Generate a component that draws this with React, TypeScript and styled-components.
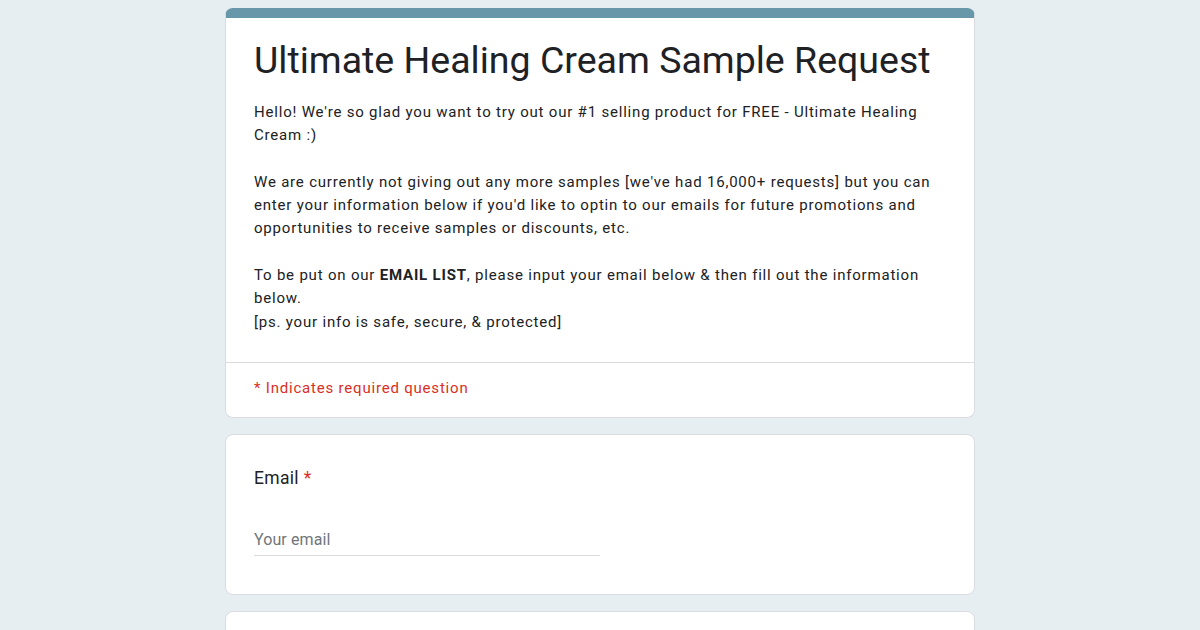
import React from 'react';
import styled, {createGlobalStyle} from "styled-components";

const GlobalStyle = createGlobalStyle`
  html, body {
    margin: 0;
    padding: 0;
    background: #e6eef1;
    overflow: hidden;
  }
  body {
    font-family: Roboto, Arial, sans-serif;
    color: #202124;
  }
`

const Page = styled.div`
  width: 1200px;
  height: 630px;
  overflow: hidden;
  display: flex;
  flex-direction: column;
  align-items: center;
  gap: 16px;
  padding-top: 8px;
  box-sizing: border-box;
`

const Card = styled.div<{ $accent?: boolean }>`
  width: 750px;
  box-sizing: border-box;
  background: #fff;
  border: 1px solid #dadce0;
  border-radius: 8px;
  flex-shrink: 0;
  overflow: hidden;
  border-top: ${p => p.$accent ? "10px solid #6797a8" : "1px solid #dadce0"};
`

const Header = styled.div`
  padding: 20px 28px 28px;
  border-bottom: 1px solid #dadce0;
`

const Title = styled.h1`
  margin: 0;
  font-family: Roboto, Arial, sans-serif;
  font-weight: 400;
  font-size: 37.5px;
  line-height: 44px;
  color: #202124;
`

const Description = styled.div`
  margin-top: 19px;
  font-size: 15px;
  line-height: 23.3px;
  letter-spacing: 0.8px;
  white-space: pre-wrap;
  color: #202124;
`

const Required = styled.div`
  padding: 14px 28px 18px;
  font-size: 15px;
  line-height: 22px;
  letter-spacing: 0.8px;
  color: #d93025;
`

const Question = styled.div`
  padding: 31px 28px 38px;
`

const Label = styled.div`
  font-size: 17.5px;
  line-height: 24px;
  letter-spacing: 0.3px;
  color: #202124;
`

const Star = styled.span`
  color: #d93025;
  margin-left: 5px;
`

const Input = styled.input`
  display: block;
  margin-top: 34px;
  width: 346px;
  height: 32px;
  box-sizing: border-box;
  border: none;
  border-bottom: 1px solid #dadce0;
  outline: none;
  padding: 0;
  font-family: Roboto, Arial, sans-serif;
  font-size: 16px;
  letter-spacing: 0.1px;
  color: #202124;
  background: transparent;

  &::placeholder {
    color: #70757a;
  }
`

const EmptyCard = styled(Card)`
  height: 120px;
`

export default function App() {
    return (
        <>
            <GlobalStyle/>
            <Page>
                <Card $accent>
                    <Header>
                        <Title>Ultimate Healing Cream Sample Request</Title>
                        <Description>
                            {"Hello! We're so glad you want to try out our #1 selling product for FREE - Ultimate Healing Cream :)\n\nWe are currently not giving out any more samples [we've had 16,000+ requests] but you can enter your information below if you'd like to optin to our emails for future promotions and opportunities to receive samples or discounts, etc.\n\nTo be put on our "}
                            <b>EMAIL LIST</b>
                            {", please input your email below & then fill out the information below.\n[ps. your info is safe, secure, & protected]"}
                        </Description>
                    </Header>
                    <Required>* Indicates required question</Required>
                </Card>
                <Card>
                    <Question>
                        <Label>Email<Star>*</Star></Label>
                        <Input placeholder="Your email"/>
                    </Question>
                </Card>
                <EmptyCard/>
            </Page>
        </>
    );
}
